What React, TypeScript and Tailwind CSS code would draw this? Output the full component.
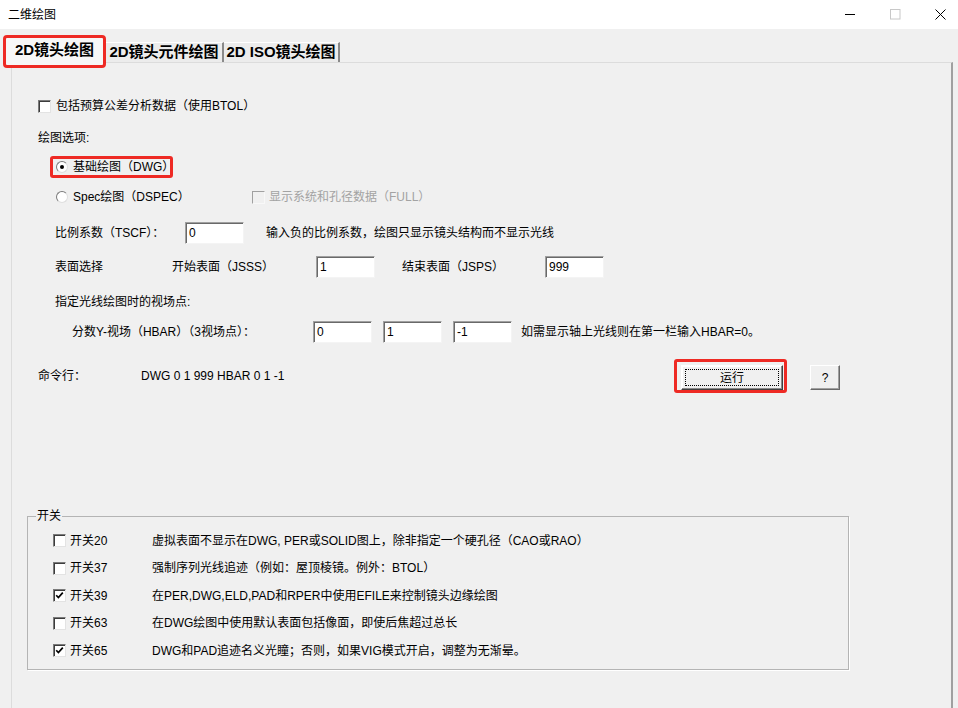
import React from "react";

const font = "font-['Liberation_Sans','Noto_Sans_CJK_SC',sans-serif]";

function CheckBox({ checked = false, disabled = false }: { checked?: boolean; disabled?: boolean }) {
  return (
    <span
      className={`flex h-[13px] w-[13px] shrink-0 items-center justify-center border ${
        disabled
          ? "border-t-[#a0a0a0] border-l-[#a0a0a0] border-r-[#f8f8f8] border-b-[#f8f8f8] bg-[#f0f0f0]"
          : "border-t-[#7a7a7a] border-l-[#7a7a7a] border-r-[#e3e3e3] border-b-[#e3e3e3] bg-white shadow-[inset_1px_1px_0_#3c3c3c]"
      }`}
    >
      {checked && (
        <svg width="9" height="9" viewBox="0 0 9 9">
          <path d="M1.2 4.2 L3.4 6.6 L7.8 1.6" fill="none" stroke="#000" strokeWidth="1.7" />
        </svg>
      )}
    </span>
  );
}

function Radio({ checked = false }: { checked?: boolean }) {
  return (
    <span className="flex h-[12px] w-[12px] shrink-0 items-center justify-center rounded-full border border-t-[#7a7a7a] border-l-[#7a7a7a] border-r-[#dedede] border-b-[#dedede] bg-white">
      {checked && <span className="h-[4px] w-[4px] rounded-full bg-black" />}
    </span>
  );
}

function Field({ value, w = "w-[59px]" }: { value: string; w?: string }) {
  return (
    <div
      className={`flex h-[22px] ${w} shrink-0 items-center border border-t-[#a0a0a0] border-l-[#a0a0a0] border-r-[#f4f4f4] border-b-[#f4f4f4] bg-white pl-[3px] text-[12px] shadow-[inset_1px_1px_0_#696969]`}
    >
      {value}
    </div>
  );
}

const switches = [
  { id: "开关20", on: false, text: "虚拟表面不显示在DWG, PER或SOLID图上，除非指定一个硬孔径（CAO或RAO）" },
  { id: "开关37", on: false, text: "强制序列光线追迹（例如：屋顶棱镜。例外：BTOL）" },
  { id: "开关39", on: true, text: "在PER,DWG,ELD,PAD和RPER中使用EFILE来控制镜头边缘绘图" },
  { id: "开关63", on: false, text: "在DWG绘图中使用默认表面包括像面，即使后焦超过总长" },
  { id: "开关65", on: true, text: "DWG和PAD追迹名义光瞳；否则，如果VIG模式开启，调整为无渐晕。" },
];

export default function App() {
  return (
    <div className={`flex h-[708px] w-[958px] flex-col overflow-hidden bg-[#f0f0f0] text-[12px] text-black ${font}`}>
      {/* title bar */}
      <div className="flex h-[29px] shrink-0 items-center justify-between bg-white pl-[8px]">
        <span className="text-[12px]">二维绘图</span>
        <div className="-mr-[5px] flex h-full items-center">
          <div className="flex w-[45px] justify-center">
            <svg width="11" height="11" viewBox="0 0 11 11">
              <path d="M0 5.5 H10" stroke="#000" strokeWidth="1" />
            </svg>
          </div>
          <div className="flex w-[45px] justify-center">
            <svg width="11" height="11" viewBox="0 0 11 11">
              <rect x="0.5" y="0.5" width="9.5" height="9.5" fill="none" stroke="#c8c8c8" strokeWidth="1" />
            </svg>
          </div>
          <div className="flex w-[45px] justify-center">
            <svg width="11" height="11" viewBox="0 0 11 11">
              <path d="M0.5 0.5 L10.5 10.5 M10.5 0.5 L0.5 10.5" stroke="#000" strokeWidth="1" />
            </svg>
          </div>
        </div>
      </div>

      {/* tabs */}
      <div className="flex h-[33px] shrink-0 items-end pl-[3px] text-[15px] font-bold">
        <div className="relative z-10 -mb-[6px] flex h-[33px] w-[103px] items-center justify-center rounded-[4px] border-[3px] border-[#ee2a24] bg-[#f7f7f7] pb-[2px]">
          2D镜头绘图
        </div>
        <div className="flex h-[20px] w-[118px] items-center justify-center border-t border-r-2 border-t-white border-r-[#8a8a8a] bg-[#ececec]">
          2D镜头元件绘图
        </div>
        <div className="flex h-[20px] w-[116px] items-center justify-center border-t border-r-2 border-t-white border-r-[#8a8a8a] bg-[#ececec]">
          2D ISO镜头绘图
        </div>
      </div>

      {/* tab panel */}
      <div className="ml-[11px] mr-[5px] flex-1 border-t border-l border-r-2 border-t-[#dcdcdc] border-l-[#dcdcdc] border-r-[#a0a0a0] pl-[26px]">
        <label className="mt-[35px] flex h-[16px] items-center gap-[5px]">
          <CheckBox />
          包括预算公差分析数据（使用BTOL）
        </label>

        <div className="mt-[16px] flex h-[16px] items-center">绘图选项:</div>

        <div className="ml-[12px] mt-[10px] flex h-[22px] w-[123px] items-center gap-[5px] rounded-[3px] border-[3px] border-[#ee2a24] pl-[3px]">
          <Radio checked />
          基础绘图（DWG）
        </div>

        <div className="mt-[11px] flex h-[16px] items-center">
          <div className="ml-[18px] flex w-[196px] items-center gap-[5px]">
            <Radio />
            Spec绘图（DSPEC）
          </div>
          <div className="flex items-center gap-[4px] text-[#a3a3a3]">
            <CheckBox disabled />
            显示系统和孔径数据（FULL）
          </div>
        </div>

        <div className="mt-[17px] flex h-[22px] items-center pl-[17px]">
          <span className="w-[130px]">比例系数（TSCF）：</span>
          <Field value="0" />
          <span className="ml-[22px]">输入负的比例系数，绘图只显示镜头结构而不显示光线</span>
        </div>

        <div className="mt-[12px] flex h-[22px] items-center pl-[17px]">
          <span className="w-[117px]">表面选择</span>
          <span className="w-[144px]">开始表面（JSSS）</span>
          <Field value="1" />
          <span className="ml-[27px] w-[143px]">结束表面（JSPS）</span>
          <Field value="999" />
        </div>

        <div className="mt-[16px] flex h-[16px] items-center pl-[17px]">指定光线绘图时的视场点:</div>

        <div className="mt-[11px] flex h-[22px] items-center pl-[34px]">
          <span className="w-[241px]">分数Y-视场（HBAR）（3视场点）：</span>
          <Field value="0" />
          <div className="ml-[11px]">
            <Field value="1" />
          </div>
          <div className="ml-[11px]">
            <Field value="-1" />
          </div>
          <span className="ml-[9px]">如需显示轴上光线则在第一栏输入HBAR=0。</span>
        </div>

        <div className="mt-[16px] flex h-[34px] items-center">
          <span className="w-[103px]">命令行：</span>
          <span className="w-[533px]">DWG 0 1 999 HBAR 0 1 -1</span>
          <div className="flex h-[34px] w-[113px] items-start rounded-[3px] border-[3px] border-[#ee2a24] pl-[4px] pt-[3px]">
            <button className="flex h-[25px] w-[102px] items-center justify-center border border-t-white border-l-white border-r-[#404040] border-b-[#404040] bg-[#f0f0f0] p-[3px] shadow-[inset_-1px_-1px_0_#8a8a8a,inset_1px_1px_0_#fff]">
              <span className="flex h-full w-full items-center justify-center border border-dotted border-black text-[12px]">
                运行
              </span>
            </button>
          </div>
          <button className="ml-[23px] mt-[3px] flex h-[25px] w-[30px] items-center justify-center border border-t-white border-l-white border-r-[#696969] border-b-[#696969] bg-[#f0f0f0] text-[12px] shadow-[inset_-1px_-1px_0_#a0a0a0]">
            ?
          </button>
        </div>

        {/* switches group */}
        <div className="relative -ml-[11px] mt-[123px] h-[154px] w-[822px] border border-[#b4b4b4] pl-[25px] pt-[10px] shadow-[1px_1px_0_#fff]">
          <span className="absolute -top-[9px] left-[8px] bg-[#f0f0f0] px-[1px] leading-[16px]">开关</span>
          {switches.map((s) => (
            <div key={s.id} className="flex h-[27.5px] items-center">
              <CheckBox checked={s.on} />
              <span className="ml-[4px] w-[82px]">{s.id}</span>
              <span>{s.text}</span>
            </div>
          ))}
        </div>
      </div>
    </div>
  );
}
